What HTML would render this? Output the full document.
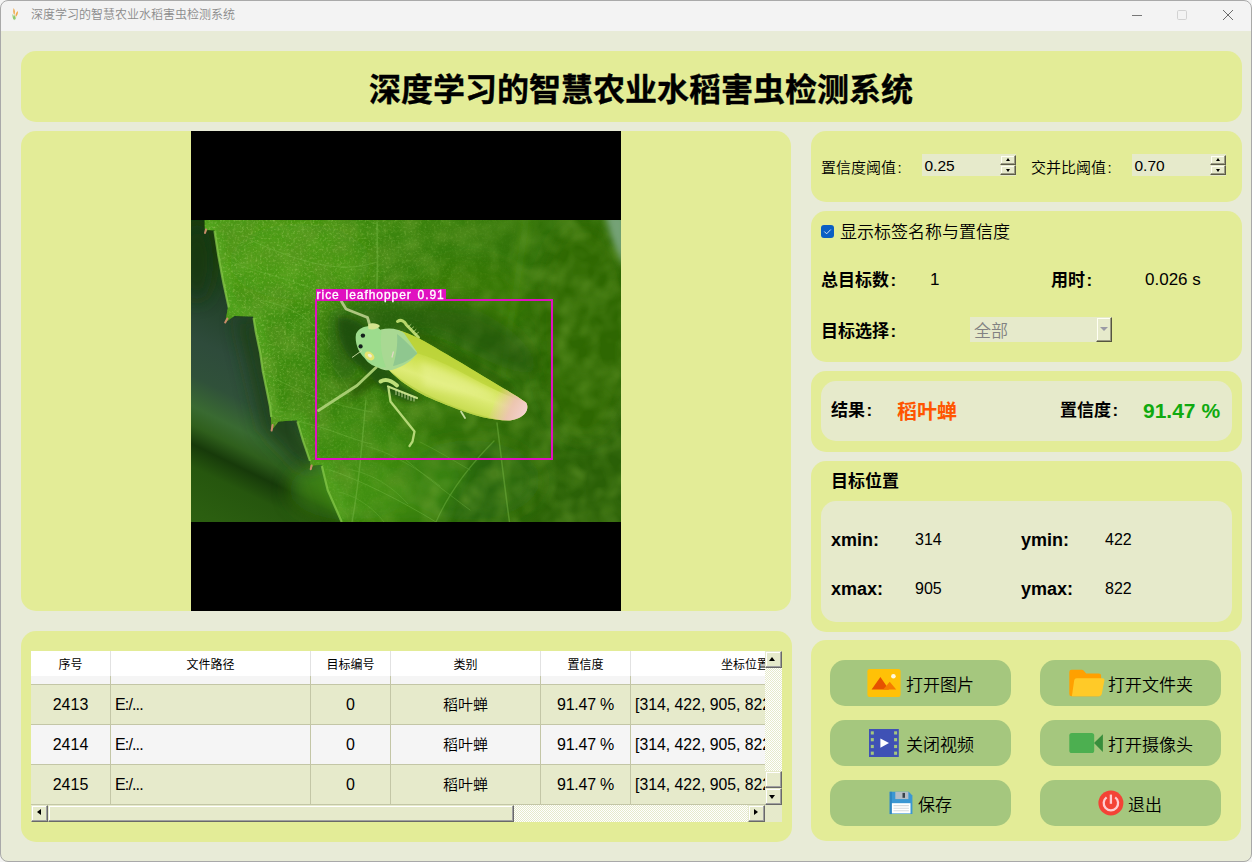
<!DOCTYPE html>
<html lang="zh-CN">
<head>
<meta charset="utf-8">
<title>深度学习的智慧农业水稻害虫检测系统</title>
<style>
*{box-sizing:border-box;margin:0;padding:0}
html,body{width:1252px;height:862px;overflow:hidden;background:#e8ebd7}
body{position:relative;font-family:"Liberation Sans","Noto Sans CJK SC",sans-serif;color:#000;font-weight:350}
.abs{position:absolute}
.t{position:absolute;white-space:nowrap;line-height:1}
#titlebar{left:0;top:0;width:1252px;height:31px;background:#f3f3f3}
#wtitle{left:31px;top:9px;font-size:12px;color:#8b8b8b}
.panel{position:absolute;background:#e3ec97;border-radius:15px}
.inner{position:absolute;background:#e6eacb;border-radius:15px}
.b{font-weight:bold}
.btn{position:absolute;background:#a5c77e;border-radius:15px;width:181px;height:46px}

.lbl15{font-size:15px}
.spin{position:absolute;width:94px;height:22px;background:#e6eacb}
.spin .v{position:absolute;left:2.5px;top:3.5px;font-size:15.5px;line-height:16px}
.sb{position:absolute;left:78px;width:16px;height:10px;background:#e6eacb;border:1px solid;border-color:#e6eacb #5c5c48 #5c5c48 #e6eacb;box-shadow:inset -1px -1px 0 #9c9c84, inset 1px 1px 0 #fffff4}
.sb i{position:absolute;left:5px;width:0;height:0;border-left:2.5px solid transparent;border-right:2.5px solid transparent}
.sb.up{top:1px}.sb.up i{top:2px;border-bottom:3px solid #000}
.sb.dn{top:11px}.sb.dn i{top:3px;border-top:3px solid #000}
.f17b{font-size:17px;font-weight:bold}
.f17{font-size:17px}
.f16{font-size:16px}
.lat18b{font-size:18px;font-weight:bold}

#tbl{position:absolute;left:31px;top:651px;width:751px;height:171px;background:#e6eacb;overflow:hidden}
#tbl .hd{position:absolute;left:0;top:0;width:734px;height:25px;background:#fff}
#tbl .strip{position:absolute;left:0;top:25px;width:734px;height:8px;background:#f5f5f5}
#tbl .row{position:absolute;left:0;width:734px;height:40px;border-top:1px solid #c3c6a6}
#tbl .vl{position:absolute;top:25px;width:1px;height:129px;background:#c3c6a6}
#tbl .hvl{position:absolute;top:0;width:1px;height:25px;background:#e2e2e2}
#tbl .h{position:absolute;top:8px;font-weight:400;font-size:12px;line-height:1;text-align:center;white-space:nowrap}
#tbl .c{position:absolute;font-size:15.5px;line-height:1;white-space:nowrap;text-align:center}
.face{position:absolute;background:#e6eacb;border:1px solid;border-color:#e6eacb #696969 #696969 #e6eacb;box-shadow:inset -1px -1px 0 #a0a0a0, inset 1px 1px 0 #fff}
.track{position:absolute;background-color:#e6eacb;background-image:conic-gradient(#ffffff 25%,#e6eacb 0 50%,#ffffff 0 75%,#e6eacb 0);background-size:2px 2px}
.ar{position:absolute;width:0;height:0}
.co{margin-left:1.5px}
</style>
</head>
<body>
<!-- window chrome -->
<div id="titlebar" class="abs"></div>
<div id="wtitle" class="t">深度学习的智慧农业水稻害虫检测系统</div>

<!-- header -->
<div class="panel" style="left:21px;top:51px;width:1221px;height:71px"></div>
<div class="t b" style="left:369px;top:74px;font-size:32px;-webkit-text-stroke:.35px #000">深度学习的智慧农业水稻害虫检测系统</div>

<!-- image panel -->
<div class="panel" style="left:21px;top:131px;width:770px;height:480px"></div>
<!-- photo -->
<svg class="abs" style="left:191px;top:131px" width="430" height="480" viewBox="191 131 430 480">
<defs>
  <clipPath id="leafc"><use href="#leaf"/></clipPath>
  <clipPath id="ph"><rect x="191" y="220" width="430" height="302"/></clipPath>
  <linearGradient id="lg" gradientUnits="userSpaceOnUse" x1="215" y1="240" x2="621" y2="420">
    <stop offset="0" stop-color="#489a15"/><stop offset=".22" stop-color="#408f10"/><stop offset=".48" stop-color="#387e0c"/><stop offset=".72" stop-color="#316e08"/><stop offset="1" stop-color="#2a6007"/>
  </linearGradient>
  <linearGradient id="bgg" gradientUnits="userSpaceOnUse" x1="300" y1="220" x2="150.4" y2="526">
    <stop offset="0" stop-color="#173a0f"/><stop offset=".2" stop-color="#193d12"/><stop offset=".32" stop-color="#23422a"/><stop offset=".45" stop-color="#2e4b3b"/><stop offset=".55" stop-color="#30513a"/><stop offset=".63" stop-color="#396a31"/><stop offset=".68" stop-color="#2f5f1c"/><stop offset=".73" stop-color="#173a0a"/><stop offset=".79" stop-color="#26560e"/><stop offset=".9" stop-color="#2b5e10"/><stop offset="1" stop-color="#2e6311"/>
  </linearGradient>
  <linearGradient id="fade" gradientUnits="userSpaceOnUse" x1="300" y1="300" x2="470" y2="380">
    <stop offset="0" stop-color="#fff"/><stop offset="1" stop-color="#000"/>
  </linearGradient>
  <mask id="gm" maskUnits="userSpaceOnUse" x="191" y="220" width="430" height="302"><rect x="191" y="220" width="430" height="302" fill="url(#fade)"/></mask>
  <linearGradient id="wing" gradientUnits="userSpaceOnUse" x1="430" y1="345" x2="412" y2="395">
    <stop offset="0" stop-color="#b6d032"/><stop offset=".35" stop-color="#d0e254"/><stop offset=".6" stop-color="#dfec78"/><stop offset="1" stop-color="#c4d94a"/>
  </linearGradient>
  <linearGradient id="tip" gradientUnits="userSpaceOnUse" x1="496" y1="395" x2="528" y2="410">
    <stop offset="0" stop-color="#f2c4c0" stop-opacity="0"/><stop offset=".55" stop-color="#f0c0bc" stop-opacity=".85"/><stop offset="1" stop-color="#f4d2d2"/>
  </linearGradient>
  <filter id="b3" x="-50%" y="-50%" width="200%" height="200%"><feGaussianBlur stdDeviation="3"/></filter>
  <filter id="b8" x="-100%" y="-100%" width="300%" height="300%"><feGaussianBlur stdDeviation="9"/></filter>
  <filter id="b1" x="-10%" y="-10%" width="120%" height="120%"><feGaussianBlur stdDeviation="0.6"/></filter>
  <filter id="grain" x="0" y="0" width="100%" height="100%">
    <feTurbulence type="fractalNoise" baseFrequency="0.45" numOctaves="2" seed="7" result="n"/>
    <feColorMatrix in="n" type="matrix" values="0 0 0 0 0.50  0 0 0 0 0.78  0 0 0 0 0.22  0 0 0 2.6 -1.35"/>
    <feComposite in2="SourceGraphic" operator="in"/>
  </filter>
  <filter id="grain2" x="0" y="0" width="100%" height="100%">
    <feTurbulence type="fractalNoise" baseFrequency="0.3" numOctaves="2" seed="23" result="n"/>
    <feColorMatrix in="n" type="matrix" values="0 0 0 0 0.16  0 0 0 0 0.38  0 0 0 0 0.03  0 0 0 2.6 -1.3"/>
    <feComposite in2="SourceGraphic" operator="in"/>
  </filter>
  <filter id="mott" x="0" y="0" width="100%" height="100%">
    <feTurbulence type="fractalNoise" baseFrequency="0.045" numOctaves="2" seed="11" result="n"/>
    <feColorMatrix in="n" type="matrix" values="0 0 0 0 0.12  0 0 0 0 0.30  0 0 0 0 0.02  0 0 0 2.2 -0.85"/>
    <feComposite in2="SourceGraphic" operator="in"/>
  </filter>
  <filter id="mott2" x="0" y="0" width="100%" height="100%">
    <feTurbulence type="fractalNoise" baseFrequency="0.05" numOctaves="2" seed="31" result="n"/>
    <feColorMatrix in="n" type="matrix" values="0 0 0 0 0.40  0 0 0 0 0.66  0 0 0 0 0.12  0 0 0 2.2 -0.95"/>
    <feComposite in2="SourceGraphic" operator="in"/>
  </filter>
  <path id="leaf" d="M204.5 220 L205 233 L207.5 230 L214.5 230.6 L218.2 255 L223.4 283 L228.2 306 L225.2 322.5 L234.5 316 L253.2 316.6 L255.8 332 L260.2 353 L262.8 371 L269.9 406 L270.8 415 L271.6 430.6 L278.6 421.6 L297 420.2 L303.1 441 L310.2 462.1 L310.7 469.2 L313.5 465.5 L321.5 464.8 L327.7 490.2 L341.7 522 L621 522 L621 220 Z"/>
</defs>
<rect x="191" y="131" width="430" height="480" fill="#000"/>
<g clip-path="url(#ph)">
  <rect x="191" y="220" width="430" height="302" fill="url(#bgg)"/>
  <!-- background blobs -->
  <path d="M236 318 L262 318 L300 425 L330 470 L300 470 L262 430 Z" fill="#1a4014" filter="url(#b8)" opacity=".85"/>
  <ellipse cx="197" cy="262" rx="16" ry="40" fill="#15380d" filter="url(#b8)" opacity=".8"/>
  <!-- leaf -->
  <use href="#leaf" fill="url(#lg)"/>
  <!-- soft tonal variation on leaf -->
  <g filter="url(#b8)">
    <ellipse cx="300" cy="262" rx="70" ry="38" fill="#52a41c" opacity=".5"/>
    <ellipse cx="350" cy="490" rx="60" ry="30" fill="#429214" opacity=".6"/>
    <ellipse cx="585" cy="330" rx="50" ry="110" fill="#2f6a08" opacity=".7"/>
    <ellipse cx="470" cy="300" rx="60" ry="40" fill="#3a7a0c" opacity=".5"/>
    <ellipse cx="470" cy="480" rx="70" ry="40" fill="#2f700d" opacity=".55"/>
  </g>
  <path d="M496 424 L509 524 L434 524 C450 492 470 464 494 441Z" fill="#24600a" opacity=".55" filter="url(#b3)"/>
  <path d="M342 524 L322 466 L300 424 L360 410 L420 440 L470 470 L440 524Z" fill="#459a16" opacity=".45" filter="url(#b8)"/>
  <g clip-path="url(#leafc)"><path d="M210 224 L228 306 L256 318 L272 418 L300 422 L312 464 L324 466 L344 522" stroke="#60b42a" stroke-width="16" fill="none" opacity=".4" filter="url(#b3)"/></g>
  <!-- mottling -->
  <use href="#leaf" fill="#fff" filter="url(#mott)" opacity=".55"/>
  <use href="#leaf" fill="#fff" filter="url(#mott2)" opacity=".14"/>
  <!-- in-focus grain on left part of leaf -->
  <g mask="url(#gm)">
    <use href="#leaf" fill="#fff" filter="url(#grain2)" opacity=".5"/>
    <use href="#leaf" fill="#fff" filter="url(#grain)" opacity=".36"/>
  </g>
  <!-- leaf edge highlight -->
  <path d="M214.5 231 L218.2 255 L223.4 283 L228.7 307.6 M253.6 318 L255.8 332 L260.2 353 L262.8 371 L269.9 406 L271.3 417 M297.4 421.5 L303.1 441 L310 461 M321.8 466 L327.7 490.2 L341.7 522" stroke="#86c84a" stroke-width="2.2" fill="none" opacity=".75" filter="url(#b1)"/>
  <path d="M205 233 L206 229.5M225.2 322.5 L227.4 318.6M271.6 430.6 L272.6 425M310.7 469.2 L311.6 465.5" stroke="#c98a6a" stroke-width="2" stroke-linecap="round"/>
  <!-- veins -->
  <g fill="none" stroke="#7dbd4c" stroke-linecap="round" opacity=".42" filter="url(#b1)">
    <path d="M377 222 L377.5 262 L376.5 300" stroke-width="1.6"/>
    <path d="M250 240 C300 262 340 275 377 262" stroke-width=".9"/>
    <path d="M258 300 C290 305 312 318 330 345" stroke-width=".9"/>
    <path d="M262 372 C300 392 330 405 372 412" stroke-width=".8"/>
    <path d="M297 421 C330 428 352 440 372 444" stroke-width=".9"/>
    <path d="M366 400 C362 440 360 480 352 522" stroke-width="1.4"/>
    <path d="M330 470 C360 480 400 500 436 522" stroke-width=".9"/>
    <path d="M497 423 C501 455 505 490 509.5 522" stroke-width="1.5"/>
    <path d="M494 441 C470 465 450 490 436 522" stroke-width="1.2"/>
    <path d="M406 460 C430 480 446 492 470 510" stroke-width=".8"/>
    <path d="M352 470 C372 474 392 486 408 504" stroke-width=".7"/>
    <path d="M338 492 C352 494 372 506 384 522" stroke-width=".7"/>
    <path d="M366 446 C390 452 420 470 440 486" stroke-width=".7"/>
    <path d="M420 442 C440 452 456 462 470 470" stroke-width=".7"/>
    <path d="M300 345 C320 352 338 368 350 392" stroke-width=".7"/>
    <path d="M232 262 C262 275 300 280 340 300" stroke-width=".7"/>
  </g>
  <path d="M526 220 C520 270 508 330 503 378" stroke="#4f9018" stroke-width="3" fill="none" opacity=".7" filter="url(#b3)"/>
  <!-- top-right hazy patch -->
  <path d="M605 214 L626 214 L626 268 C615 250 609 234 605 214Z" fill="#74a276" filter="url(#b3)"/>
  <!-- darker leaf zone around insect -->
  <path d="M330 312 C360 296 450 296 482 312 C520 330 545 362 532 374 C500 372 470 350 440 338 C400 328 362 350 348 388 C332 382 322 338 330 312Z" fill="#1f4c07" opacity=".55" filter="url(#b8)"/>
  <!-- insect shadow -->
  <g filter="url(#b3)" fill="#1e4c08" opacity=".8">
    <path d="M338 318 C350 316 360 322 368 330 L392 372 C400 384 410 392 424 398 L410 402 C392 398 380 390 372 378 L352 360 C342 350 336 334 338 318Z"/>
    <path d="M352 384 L386 366 L392 376 L350 400Z" opacity=".8"/>
    <path d="M412 326 L500 376 L520 392 L498 386 L440 354 L408 336Z" opacity=".55"/>
  </g>
  <!-- insect -->
  <g stroke-linecap="round" stroke-linejoin="round" fill="none">
    <!-- antenna / front leg -->
    <path d="M341.5 301.5 L346 309 L367.5 317.5 L369.3 323.5" stroke="#aec680" stroke-width="2.8"/>
    <!-- upper (far) leg -->
    <path d="M397.5 321.5 C401 319 404.5 321 406.5 325 L418.5 337.5" stroke="#b7d66a" stroke-width="3"/>
    <path d="M408 327l3-2.5M410.5 329.5l3-2.5M413 332l3-2.5M415.5 334.5l3-2.2" stroke="#cfe49a" stroke-width=".7"/>
    <!-- mid leg -->
    <path d="M376.5 367 L357 385.5 L318.5 410.5" stroke="#a6cc70" stroke-width="2.8"/>
    <!-- hind leg -->
    <path d="M380.5 381.5 C386 378 392 381 397 385.5" stroke="#bfe07a" stroke-width="4"/>
    <path d="M388.5 388 L390.5 401.5 L414.5 431.5 L412.5 441.5 L409.5 446" stroke="#b5d877" stroke-width="2.3"/>
    <path d="M388 386.5 L417 398" stroke="#c3df86" stroke-width="2.2"/>
    <path d="M396 390.5v4M399 391.7v4M402 392.9v4M405 394v4M408 395.2v4M411 396.4v4M414 397.5v3.6" stroke="#dcecb4" stroke-width=".8"/>
    <path d="M461 411.5 L465 418" stroke="#c6dca0" stroke-width="1.8"/>
  </g>
  <!-- wings -->
  <path d="M398 330 C412 334 426 342 440 350.5 C460 362 480 374 497 384.5 C508 391 518 396.5 526 402.5 C528.5 406 527.5 411.5 524 414.5 C520 418 514 420.5 508 420.5 C492 420.5 474 415.5 457 409 C442 403 428 398 417 391.5 C405 384.5 394 376 388 369 L384 356 Z" fill="url(#wing)"/>
  <path d="M398 330 C412 334 426 342 440 350.5 C460 362 480 374 497 384.5 C508 391 518 396.5 526 402.5 C510 397 490 388 470 377 C450 366 430 356 412 352 Z" fill="#bcd43a" opacity=".85"/>
  <path d="M392 372 C410 388 440 402 470 412 C486 417 498 420 508 420.5 C492 420.5 474 415.5 457 409 C442 403 428 398 417 391.5 C405 384.5 396 378 392 372Z" fill="#b4cf44" opacity=".8"/>
  <path d="M420 362 C440 366 470 380 500 398 C480 396 450 392 424 386Z" fill="#e8f290" opacity=".6" filter="url(#b3)"/>
  <path d="M497 384.5 C508 391 518 396.5 526 402.5 C528.5 406 527.5 411.5 524 414.5 C520 418 514 420.5 508 420.5 C500 420.5 494 419 488 417.5 C494 408 496 396 497 384.5Z" fill="url(#tip)"/>
  <!-- thorax + head -->
  <path d="M381 329.5 C390 327 399 329 404 333 L417 352 C414 360 404 366 392 370 C384 371.5 376 368 371.5 362 C366 352 370 336 381 329.5Z" fill="#a9d993"/>
  <path d="M397 334 C403 338 410 346 417.5 353.5 C410 360 402 364 393 366 C396 356 398 345 397 334Z" fill="#8fc78f"/>
  <path d="M366.5 326.5 C372 325 379 327 381.5 331 C380 343 381 355 386 367 C378 369 369 365 364.5 358 C358 352 354.5 342 356 334 C358 329.5 362 327 366.5 326.5Z" fill="#9ddc8d"/>
  <path d="M368 324.5 C371.5 322.5 377.5 323 380 326 C378 329 373 330 368.5 329Z" fill="#d4e48e"/>
  <ellipse cx="369.5" cy="356" rx="5.4" ry="3.8" transform="rotate(35 369.5 356)" fill="#e6e470"/>
  <ellipse cx="369.8" cy="355.6" rx="2.3" ry="1.6" transform="rotate(35 369.8 355.6)" fill="#f1eed2"/>
  <circle cx="362.9" cy="335.6" r="2.2" fill="#14201c"/>
  <circle cx="360.6" cy="346.4" r="2.1" fill="#14201c"/>
  <path d="M362 350.5 L352 357.5" stroke="#cfe0a8" stroke-width=".9" fill="none"/>
  <path d="M393.5 351.5l-1.6 6" stroke="#e8d8cc" stroke-width="1.2" fill="none" opacity=".9"/>
</g>
<!-- detection box -->
<rect x="316" y="300" width="236" height="159" fill="none" stroke="#e010c0" stroke-width="2"/>
<rect x="316" y="289" width="130" height="11" fill="#e010c0"/>
<text x="316.6" y="298.6" font-family="'Liberation Sans',sans-serif" font-size="12" fill="#ffffff" letter-spacing="0.95" word-spacing="1.5" stroke="#ffffff" stroke-width=".35">rice leafhopper 0.91</text>
</svg>


<!-- table panel -->
<div class="panel" style="left:21px;top:631px;width:771px;height:211px"></div>

<!-- right panels -->
<div class="panel" style="left:811px;top:131px;width:431px;height:71px"></div>
<div class="panel" style="left:811px;top:211px;width:431px;height:151px"></div>
<div class="panel" style="left:811px;top:371px;width:431px;height:81px"></div>
<div class="inner" style="left:821px;top:381px;width:411px;height:60px"></div>
<div class="panel" style="left:811px;top:461px;width:431px;height:171px"></div>
<div class="inner" style="left:821px;top:501px;width:411px;height:121px"></div>
<div class="panel" style="left:811px;top:640px;width:430px;height:201px"></div>


<!-- window controls -->
<svg class="abs" style="left:1120px;top:0" width="132" height="31" viewBox="0 0 132 31">
  <path d="M12 15.5h10" stroke="#777" stroke-width="1" fill="none"/>
  <rect x="57.5" y="10.5" width="9" height="9" rx="1.2" fill="none" stroke="#d2d2d2" stroke-width="1"/>
  <path d="M103 10l10 10M113 10l-10 10" stroke="#6b6b6b" stroke-width="1" fill="none"/>
</svg>
<!-- app icon -->
<svg class="abs" style="left:11px;top:7px" width="10" height="15" viewBox="0 0 10 15">
  <path d="M2.6 1 C4.2 3 4.3 6 3.3 8 C2.2 6.5 1.9 3.5 2.6 1Z" fill="#f0a848"/>
  <path d="M6.8 4 C7.3 6 6.4 8.5 4.6 10 C4.2 8 5 5.5 6.8 4Z" fill="#f0a848"/>
  <path d="M1.6 7 C2.6 8.2 3.2 10 3 13 C1.7 11.5 1.3 9 1.6 7Z" fill="#88c868"/>
  <path d="M3.4 8 C4.4 9 4.6 10.5 3.3 13.2 C2.8 11.5 2.8 9.5 3.4 8Z" fill="#8acb6a"/>
  <path d="M5.2 9.6 C5.3 11 4.6 12.3 3.4 13.3 C3.6 11.8 4.2 10.5 5.2 9.6Z" fill="#9ad07a"/>
</svg>

<!-- panel 1 : thresholds -->
<div class="t lbl15" style="left:821px;top:160px">置信度阈值<span class="co">:</span></div>
<div class="spin" style="left:922px;top:154px"><span class="v">0.25</span><div class="sb up"><i></i></div><div class="sb dn"><i></i></div></div>
<div class="t lbl15" style="left:1031px;top:160px">交并比阈值<span class="co">:</span></div>
<div class="spin" style="left:1132px;top:154px"><span class="v">0.70</span><div class="sb up"><i></i></div><div class="sb dn"><i></i></div></div>

<!-- panel 2 -->
<svg class="abs" style="left:821px;top:225px" width="13" height="13" viewBox="0 0 13 13"><rect width="13" height="13" rx="3" fill="#0a5fc4"/><path d="M3.6 6.8l2 2 3.9-4" stroke="#dfeaf8" stroke-width=".95" fill="none" stroke-linecap="round" stroke-linejoin="round"/></svg>
<div class="t f17" style="left:840px;top:224px">显示标签名称与置信度</div>
<div class="t f17b" style="left:821px;top:272px">总目标数<span class="co">:</span></div>
<div class="t f17" style="left:930px;top:271px">1</div>
<div class="t f17b" style="left:1051px;top:272px">用时<span class="co">:</span></div>
<div class="t f17" style="left:1145px;top:271px">0.026 s</div>
<div class="t f17b" style="left:821px;top:323px">目标选择<span class="co">:</span></div>
<div class="abs" style="left:970px;top:317px;width:142px;height:25px;background:#e6eacb"></div>
<div class="t f17" style="left:974px;top:323px;color:#828282">全部</div>
<div class="abs" style="left:1096px;top:317px;width:16px;height:25px;background:#e6eacb;border:1px solid;border-color:#e6eacb #55553f #55553f #e6eacb;box-shadow:inset -1px -1px 0 #9c9c84, inset 1px 1px 0 #fffff4"></div>
<div class="abs" style="left:1100px;top:327px;width:0;height:0;border-left:4px solid transparent;border-right:4px solid transparent;border-top:4px solid #9a9aa5"></div>

<!-- panel 3 -->
<div class="t f17b" style="left:831px;top:402px">结果<span class="co">:</span></div>
<div class="t" style="left:897px;top:402px;font-size:20px;font-weight:bold;color:#ff5500">稻叶蝉</div>
<div class="t f17b" style="left:1060px;top:402px">置信度<span class="co">:</span></div>
<div class="t" style="left:1143px;top:400px;font-size:21px;font-weight:bold;color:#10aa10">91.47 %</div>

<!-- panel 4 -->
<div class="t f17b" style="left:831px;top:473px">目标位置</div>
<div class="t lat18b" style="left:831px;top:530.5px">xmin:</div>
<div class="t f16" style="left:915px;top:531.5px">314</div>
<div class="t lat18b" style="left:1021px;top:530.5px">ymin:</div>
<div class="t f16" style="left:1105px;top:531.5px">422</div>
<div class="t lat18b" style="left:831px;top:580px">xmax:</div>
<div class="t f16" style="left:915px;top:581px">905</div>
<div class="t lat18b" style="left:1021px;top:580px">ymax:</div>
<div class="t f16" style="left:1105px;top:581px">822</div>


<!-- panel 5 : buttons -->
<div class="btn" style="left:830px;top:660px"></div>
<div class="btn" style="left:1040px;top:660px"></div>
<div class="btn" style="left:830px;top:720px"></div>
<div class="btn" style="left:1040px;top:720px"></div>
<div class="btn" style="left:830px;top:780px"></div>
<div class="btn" style="left:1040px;top:780px"></div>

<!-- picture icon -->
<svg class="abs" style="left:867px;top:668px" width="35" height="30" viewBox="867 668 35 30">
  <rect x="867.4" y="669" width="33.2" height="28" rx="2.2" fill="#ffc107"/>
  <path d="M871.6 689.4L880.4 677L889 689.4Z" fill="#e65100"/>
  <path d="M883.2 689.4L889.7 681.8L896.2 689.4Z" fill="#f57c00"/>
  <circle cx="893.4" cy="676.3" r="2.3" fill="#fff8e1"/>
</svg>
<div class="t f17" style="left:906px;top:676.5px">打开图片</div>

<!-- folder icon -->
<svg class="abs" style="left:1068px;top:668px" width="38" height="30" viewBox="1068 668 38 30">
  <path d="M1069.3 672 q0 -2.3 2.3 -2.3 h10 q1.2 0 2 .9 l2.6 2.8 h12.6 q2.3 0 2.3 2.3 v18.2 q0 2.3 -2.3 2.3 h-27.2 q-2.3 0 -2.3 -2.3z" fill="#ffa000"/>
  <path d="M1076.6 678.2 h25.8 q2.4 0 2 2.3 l-2.6 13.6 q-.45 2.1 -2.6 2.1 h-27.3 l2.3 -15.9 q.3 -2.1 2.4 -2.1z" fill="#ffca28"/>
</svg>
<div class="t f17" style="left:1108px;top:676.5px">打开文件夹</div>

<!-- video icon -->
<svg class="abs" style="left:868px;top:728px" width="32" height="30" viewBox="868 728 32 30">
  <rect x="869" y="729" width="29.8" height="28" fill="#3f51b5"/>
  <g fill="#a5c77e">
    <rect x="870.8" y="731.3" width="3" height="3.2"/><rect x="870.8" y="738.1" width="3" height="3.2"/><rect x="870.8" y="744.9" width="3" height="3.2"/><rect x="870.8" y="751.6" width="3" height="3.2"/>
    <rect x="894.1" y="731.3" width="3" height="3.2"/><rect x="894.1" y="738.1" width="3" height="3.2"/><rect x="894.1" y="744.9" width="3" height="3.2"/><rect x="894.1" y="751.6" width="3" height="3.2"/>
  </g>
  <path d="M880.4 738.5L889 743.1L880.4 747.8Z" fill="#fff"/>
</svg>
<div class="t f17" style="left:906px;top:736.5px">关闭视频</div>

<!-- camera icon -->
<svg class="abs" style="left:1068px;top:731px" width="37" height="24" viewBox="1068 731 37 24">
  <path d="M1094 743.1L1102.9 734.2V752Z" fill="#388e3c"/>
  <rect x="1069.3" y="733" width="24.9" height="20" rx="2.6" fill="#4caf50"/>
</svg>
<div class="t f17" style="left:1108px;top:736.5px">打开摄像头</div>

<!-- save icon -->
<svg class="abs" style="left:889px;top:791px" width="25" height="24" viewBox="889 791 25 24">
  <path d="M889.7 791.8 h19 l3.7 3.7 v18.6 h-22.7z" fill="#3b97d3"/>
  <rect x="889.7" y="791.8" width="2.2" height="22.3" fill="#2e86c1"/>
  <rect x="895.3" y="791.8" width="13.1" height="7.3" fill="#b4bec6"/>
  <rect x="902.5" y="792.9" width="2.5" height="4.9" fill="#39424a"/>
  <rect x="891.9" y="803.2" width="18.6" height="10.2" fill="#ffffff"/>
  <path d="M893.5 805.6h15.4M893.5 808.2h15.4M893.5 810.8h15.4" stroke="#d6dade" stroke-width="1.1"/>
</svg>
<div class="t f17" style="left:918px;top:796.5px">保存</div>

<!-- exit icon -->
<svg class="abs" style="left:1097px;top:789px" width="28" height="28" viewBox="1097 789 28 28">
  <circle cx="1110.9" cy="803" r="12.5" fill="#f44336"/>
  <path d="M1106.6 797.4 A7.2 7.2 0 1 0 1115.2 797.4" fill="none" stroke="#ffcdd2" stroke-width="2.3" stroke-linecap="butt"/>
  <path d="M1110.9 794.6V803.8" stroke="#ffcdd2" stroke-width="2.3"/>
</svg>
<div class="t f17" style="left:1128px;top:796.5px">退出</div>

<!-- table -->
<div id="tbl">
<div class="hd"></div><div class="strip"></div>
<div class="row" style="top:33px;background:#e6eacb"></div>
<div class="row" style="top:73px;background:#f5f5f5"></div>
<div class="row" style="top:113px;background:#e6eacb"></div>
<div class="vl" style="left:79px"></div><div class="hvl" style="left:79px"></div>
<div class="vl" style="left:279px"></div><div class="hvl" style="left:279px"></div>
<div class="vl" style="left:359px"></div><div class="hvl" style="left:359px"></div>
<div class="vl" style="left:509px"></div><div class="hvl" style="left:509px"></div>
<div class="vl" style="left:599px"></div><div class="hvl" style="left:599px"></div>
<div class="h" style="left:0px;width:79px">序号</div>
<div class="h" style="left:80px;width:199px">文件路径</div>
<div class="h" style="left:280px;width:79px">目标编号</div>
<div class="h" style="left:360px;width:149px">类别</div>
<div class="h" style="left:510px;width:89px">置信度</div>
<div class="h" style="left:690px;text-align:left">坐标位置</div>
<div class="c" style="left:0;width:79px;top:46px;font-size:16px">2413</div>
<div class="c" style="left:84px;top:46px;text-align:left;font-size:16px;letter-spacing:-.85px">E:/...</div>
<div class="c" style="left:280px;width:79px;top:46px;font-size:16px">0</div>
<div class="c" style="left:360px;width:149px;top:46px;font-size:15px">稻叶蝉</div>
<div class="c" style="font-size:16px;letter-spacing:-.25px;left:510px;width:89px;top:46px">91.47 %</div>
<div class="c" style="left:604px;top:46px;text-align:left;font-size:15.8px">[314, 422, 905, 822]</div>
<div class="c" style="left:0;width:79px;top:86px;font-size:16px">2414</div>
<div class="c" style="left:84px;top:86px;text-align:left;font-size:16px;letter-spacing:-.85px">E:/...</div>
<div class="c" style="left:280px;width:79px;top:86px;font-size:16px">0</div>
<div class="c" style="left:360px;width:149px;top:86px;font-size:15px">稻叶蝉</div>
<div class="c" style="font-size:16px;letter-spacing:-.25px;left:510px;width:89px;top:86px">91.47 %</div>
<div class="c" style="left:604px;top:86px;text-align:left;font-size:15.8px">[314, 422, 905, 822]</div>
<div class="c" style="left:0;width:79px;top:126px;font-size:16px">2415</div>
<div class="c" style="left:84px;top:126px;text-align:left;font-size:16px;letter-spacing:-.85px">E:/...</div>
<div class="c" style="left:280px;width:79px;top:126px;font-size:16px">0</div>
<div class="c" style="left:360px;width:149px;top:126px;font-size:15px">稻叶蝉</div>
<div class="c" style="font-size:16px;letter-spacing:-.25px;left:510px;width:89px;top:126px">91.47 %</div>
<div class="c" style="left:604px;top:126px;text-align:left;font-size:15.8px">[314, 422, 905, 822]</div>
<div class="track" style="left:734px;top:0;width:17px;height:154px"></div>
<div class="face" style="left:734px;top:0;width:17px;height:17px"></div><div class="ar" style="left:738px;top:6px;border-left:3.5px solid transparent;border-right:3.5px solid transparent;border-bottom:4px solid #000"></div>
<div class="face" style="left:734px;top:120px;width:17px;height:17px"></div>
<div class="face" style="left:734px;top:137px;width:17px;height:17px"></div><div class="ar" style="left:738px;top:143.5px;border-left:3.5px solid transparent;border-right:3.5px solid transparent;border-top:4px solid #000"></div>
<div class="abs" style="left:0;top:153px;width:734px;height:1px;background:#c3c6a6"></div><div class="track" style="left:0;top:154px;width:734px;height:17px"></div>
<div class="face" style="left:0;top:154px;width:17px;height:17px"></div><div class="ar" style="left:6px;top:158px;border-top:3.5px solid transparent;border-bottom:3.5px solid transparent;border-right:4px solid #000"></div>
<div class="face" style="left:17px;top:154px;width:466px;height:17px"></div>
<div class="face" style="left:717px;top:154px;width:17px;height:17px"></div><div class="ar" style="left:723px;top:158px;border-top:3.5px solid transparent;border-bottom:3.5px solid transparent;border-left:4px solid #000"></div>
<div class="abs" style="left:734px;top:154px;width:17px;height:17px;background:#e6eacb"></div>
</div>
<div class="abs" style="left:0;top:0;width:1252px;height:862px;border:1px solid #a9a9a9;border-radius:8px;box-shadow:0 0 0 12px #f4f4f4;pointer-events:none"></div>
</body>
</html>
